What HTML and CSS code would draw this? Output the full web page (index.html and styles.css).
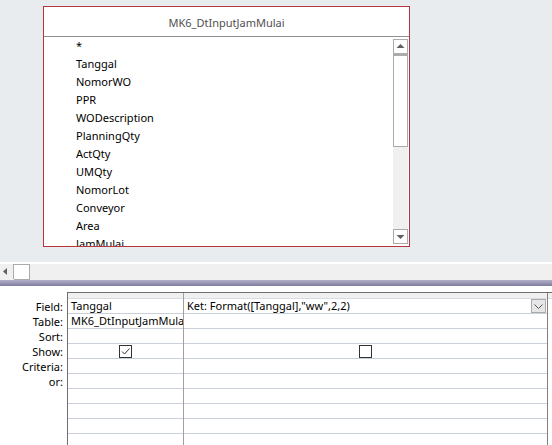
FILE: index.html
```html
<!DOCTYPE html>
<html>
<head>
<meta charset="utf-8">
<link rel="stylesheet" href="styles.css">
</head>
<body>
<div class="design">
  <div class="tbox">
    <div class="thead">MK6_DtInputJamMulai</div>
    <div class="tbody">
      <ul class="fields">
        <li>*</li>
        <li>Tanggal</li>
        <li>NomorWO</li>
        <li>PPR</li>
        <li>WODescription</li>
        <li>PlanningQty</li>
        <li>ActQty</li>
        <li>UMQty</li>
        <li>NomorLot</li>
        <li>Conveyor</li>
        <li>Area</li>
        <li>JamMulai</li>
      </ul>
      <div class="vscroll">
        <div class="sbtn"><svg width="13" height="13" viewBox="0 0 13 13"><path d="M2.5 8 L6.5 4 L10.5 8 Z" fill="#606060"/></svg></div>
        <div class="thumb"></div>
        <div class="track"></div>
        <div class="sbtn"><svg width="13" height="13" viewBox="0 0 13 13"><path d="M2.5 5 L6.5 9 L10.5 5 Z" fill="#606060"/></svg></div>
      </div>
    </div>
  </div>
</div>
<div class="hgap"></div>
<div class="hscroll">
  <div class="hbtn"><svg width="13" height="15" viewBox="0 0 13 15"><path d="M7 4 L3 7.5 L7 11 Z" fill="#606060"/></svg></div>
  <div class="hthumb"></div>
</div>
<div class="splitter"></div>
<div class="qbe">
  <div class="labels">
    <div class="lhead"></div>
    <div class="lab">Field:</div>
    <div class="lab">Table:</div>
    <div class="lab">Sort:</div>
    <div class="lab">Show:</div>
    <div class="lab">Criteria:</div>
    <div class="lab">or:</div>
  </div>
  <div class="gridbox">
    <div class="col c1">
      <div class="chead"></div>
      <div class="cell">Tanggal</div>
      <div class="cell">MK6_DtInputJamMulai</div>
      <div class="cell"></div>
      <div class="cell center"><span class="chk"><svg width="11" height="11" viewBox="0 0 11 11"><path d="M2 5.5 L4.5 8 L9.5 2.5" fill="none" stroke="#333" stroke-width="1"/></svg></span></div>
      <div class="cell"></div>
      <div class="cell"></div>
      <div class="cell"></div>
      <div class="cell"></div>
      <div class="cell"></div>
      <div class="cell"></div>
    </div>
    <div class="col c2">
      <div class="chead"></div>
      <div class="cell field2"><span>Ket: Format([Tanggal],"ww",2,2)</span><span class="dd"><svg width="13" height="12" viewBox="0 0 13 12"><path d="M2.5 4.5 L6.5 8.5 L10.5 4.5" fill="none" stroke="#555" stroke-width="1"/></svg></span></div>
      <div class="cell"></div>
      <div class="cell"></div>
      <div class="cell center"><span class="chk"></span></div>
      <div class="cell"></div>
      <div class="cell"></div>
      <div class="cell"></div>
      <div class="cell"></div>
      <div class="cell"></div>
      <div class="cell"></div>
    </div>
    <div class="col c3">
      <div class="chead"></div>
    </div>
  </div>
</div>
</body>
</html>
```
FILE: styles.css
```css
html, body {
  margin: 0;
  padding: 0;
  width: 552px;
  height: 445px;
  overflow: hidden;
  background: #ffffff;
  font-family: "Noto Sans", "Open Sans", sans-serif;
}
.design {
  height: 262px;
  background: #e9ecef;
  padding: 6px 0 0 43px;
  box-sizing: border-box;
}
.tbox {
  width: 367px;
  height: 241px;
  box-sizing: border-box;
  border: 1px solid #b5363d;
  background: #ffffff;
  display: flex;
  flex-direction: column;
}
.thead {
  height: 29px;
  border-bottom: 1px solid #8e9398;
  text-align: center;
  font-size: 11px;
  line-height: 31px;
  color: #505050;
}
.tbody {
  flex: 1;
  display: flex;
  overflow: hidden;
}
.fields {
  list-style: none;
  margin: 0;
  padding: 0 0 0 32px;
  flex: 1;
  overflow: hidden;
}
.fields li {
  height: 18px;
  line-height: 18px;
  font-size: 11px;
  color: #000;
  white-space: nowrap;
}
.vscroll {
  width: 15px;
  margin: 2px 1px 2px 0;
  display: flex;
  flex-direction: column;
  background: #f0f0f0;
}
.sbtn {
  height: 13px;
  border: 1px solid #ababab;
  background: #fff;
  display: flex;
  align-items: center;
  justify-content: center;
}
.sbtn svg { display: block; }
.thumb {
  height: 90px;
  border: 1px solid #ababab;
  border-top: 2px solid #ababab;
  background: #fff;
}
.track { flex: 1; }
.hgap {
  height: 2px;
  background: #ffffff;
}
.hscroll {
  height: 16px;
  background: #f0f0f0;
  display: flex;
}
.hbtn {
  width: 13px;
  height: 15px;
  background: #f0f0f0;
  border-right: 1px solid #ababab;
}
.hbtn svg { display: block; }
.hthumb {
  width: 15px;
  height: 14px;
  border: 1px solid #ababab;
  border-left: none;
  background: #fff;
}
.splitter {
  height: 6px;
  background: linear-gradient(#b2b1c8, #7e7c9e);
}
.qbe {
  display: flex;
  padding-top: 6px;
}
.labels {
  width: 67px;
  flex: none;
}
.lhead { height: 7px; }
.lab {
  height: 15px;
  line-height: 15px;
  font-size: 11px;
  text-align: right;
  padding-right: 4px;
  color: #000;
}
.gridbox {
  flex: 1;
  display: flex;
  border-left: 1px solid #6e6e6e;
  border-top: 1px solid #6e6e6e;
  height: 160px;
}
.col {
  display: flex;
  flex-direction: column;
  border-right: 1px solid #a0a0a0;
}
.c1 { width: 115px; }
.c2 { width: 363px; border-right-color: #808080; }
.c3 { flex: 1; border-right: none; }
.chead {
  height: 5px;
  background: #f0f0f0;
  border-bottom: 1px solid #d8dce2;
}
.cell {
  height: 14px;
  border-bottom: 1px solid #c9d0dc;
  font-size: 11px;
  line-height: 14px;
  padding-left: 3px;
  white-space: nowrap;
  overflow: hidden;
  color: #000;
}
.center {
  display: flex;
  justify-content: center;
  align-items: center;
  padding-left: 0;
}
.chk {
  width: 11px;
  height: 11px;
  border: 1px solid #333;
  display: block;
  background: #fff;
}
.chk svg { display: block; }
.field2 {
  display: flex;
  justify-content: space-between;
  align-items: center;
  padding-right: 1px;
}
.dd {
  width: 13px;
  height: 12px;
  border: 1px solid #ababab;
  background: #e6e6e6;
  display: block;
}
.dd svg { display: block; }
```
